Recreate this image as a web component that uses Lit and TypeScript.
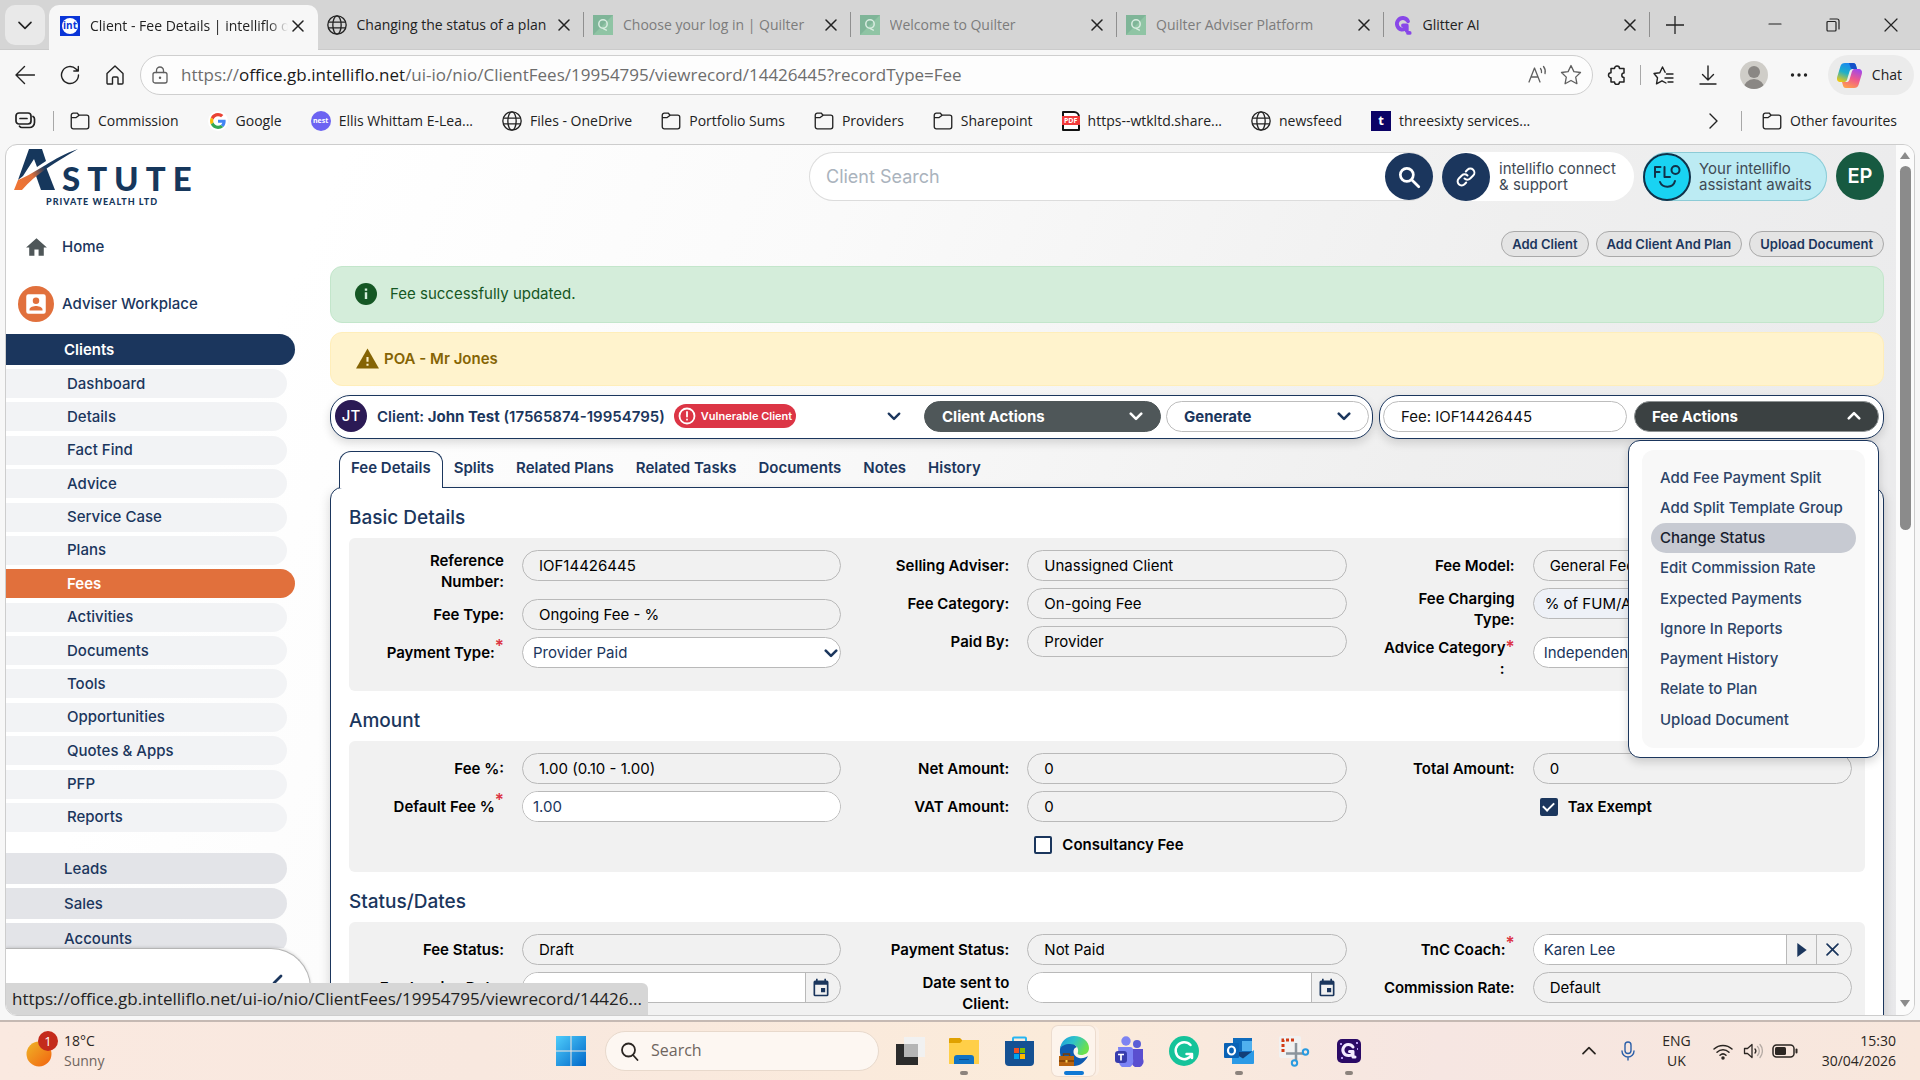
import { LitElement, html, css, svg, nothing, TemplateResult } from "lit";
import { customElement } from "lit/decorators.js";
import { classMap } from "lit/directives/class-map.js";

const base = css`
  * {
    box-sizing: border-box;
  }
  button {
    font: inherit;
    color: inherit;
    background: none;
    border: 0;
    padding: 0;
    margin: 0;
    display: inline-flex;
    align-items: center;
    justify-content: center;
    flex: none;
  }
  a {
    color: inherit;
    text-decoration: none;
  }
  input,
  select {
    font: inherit;
    color: inherit;
    margin: 0;
    min-width: 0;
  }
  svg {
    display: block;
    flex: none;
  }
`;

const stroked = (size: number, body: unknown, width = 1.5, box = 24) => html`
  <svg width=${size} height=${size} viewBox="0 0 ${box} ${box}" fill="none" stroke="currentColor"
    stroke-width=${width} stroke-linecap="round" stroke-linejoin="round" aria-hidden="true">${body}</svg>`;

const filled = (size: number, body: unknown, box = 24) => html`
  <svg width=${size} height=${size} viewBox="0 0 ${box} ${box}" fill="currentColor" aria-hidden="true">${body}</svg>`;

const globe = stroked(20, svg`<circle cx="12" cy="12" r="11"/><ellipse cx="12" cy="12" rx="5" ry="11"/><path d="M2 8.5h20M2 15.5h20"/>`, 1.6);
const folder = stroked(20, svg`<path d="M1.500 8V5a2.500 2.500 0 0 1 2.500-2.500h4.500l2.500 2.500h9A2.500 2.500 0 0 1 22.500 7.500V19a2.500 2.500 0 0 1-2.500 2.500H4A2.500 2.500 0 0 1 1.500 19V8h5.500l4-3"/>`, 1.6);
const cross = stroked(12, svg`<path d="M1 1l10 10M11 1L1 11"/>`, 1.5, 12);
const chevronDown = (size = 12, width = 2) => stroked(size, svg`<path d="M1.500 4l4.500 4.500L10.500 4"/>`, width, 12);
const chevronUp = (size = 12, width = 2) => stroked(size, svg`<path d="M1.500 8L6 3.500 10.500 8"/>`, width, 12);
const calendar = filled(20, svg`<path d="M17 12h-5v5h5v-5zM16 1v2H8V1H6v2H5a2 2 0 0 0-2 2v15a2 2 0 0 0 2 2h14a2 2 0 0 0 2-2V5a2 2 0 0 0-2-2h-1V1h-2zm3 19H5V8h14v12z"/>`);

const quilter = html`
  <svg width="20" height="20" viewBox="0 0 20 20" aria-hidden="true">
    <path fill="#7fb598" d="M0 0h20v20H0z"/><path fill="#8fc4a4" d="M20 0v20H0z"/>
    <circle cx="10" cy="9" r="4.200" fill="none" stroke="#d9ece1" stroke-width="1.500"/>
    <path d="M10 13.500c1.500 0 2 2 4 1.700" fill="none" stroke="#d9ece1" stroke-width="1.300"/>
  </svg>`;

interface TabInfo { title: string; icon: TemplateResult; active?: boolean; asleep?: boolean }

const tabs: TabInfo[] = [
  {
    title: "Client - Fee Details | intelliflo office",
    active: true,
    icon: html`<span class="int"><span>int</span></span>`,
  },
  { title: "Changing the status of a plan", icon: globe },
  { title: "Choose your log in | Quilter", icon: quilter, asleep: true },
  { title: "Welcome to Quilter", icon: quilter, asleep: true },
  { title: "Quilter Adviser Platform", icon: quilter, asleep: true },
  {
    title: "Glitter AI",
    icon: stroked(20, svg`<path stroke="#8847e8" d="M18 7.500A7 7 0 1 0 10.500 17.500 6 6 0 0 0 16.500 12.500H12M16.500 13v6M18 21.500h2"/>`, 4.600),
  },
];

const favourites: { title: string; icon: TemplateResult }[] = [
  { title: "Commission", icon: folder },
  {
    title: "Google",
    icon: html`<svg width="20" height="20" viewBox="-6 -6 60 60" aria-hidden="true">
      <circle cx="24" cy="24" r="30" fill="#fff"/>
      <path fill="#EA4335" d="M24 9.500c3.540 0 6.710 1.220 9.210 3.600l6.850-6.850C35.900 2.380 30.470 0 24 0 14.620 0 6.510 5.380 2.560 13.220l7.980 6.190C12.430 13.720 17.740 9.500 24 9.500z"/>
      <path fill="#4285F4" d="M46.980 24.550c0-1.570-.15-3.090-.38-4.550H24v9.020h12.940c-.58 2.960-2.260 5.480-4.780 7.180l7.730 6c4.510-4.180 7.090-10.360 7.090-17.650z"/>
      <path fill="#FBBC05" d="M10.530 28.590c-.48-1.450-.76-2.990-.76-4.590s.27-3.140.76-4.590l-7.980-6.190C.92 16.460 0 20.120 0 24c0 3.880.92 7.540 2.560 10.780l7.970-6.190z"/>
      <path fill="#34A853" d="M24 48c6.480 0 11.930-2.130 15.890-5.810l-7.730-6c-2.150 1.450-4.920 2.300-8.160 2.300-6.260 0-11.570-4.220-13.470-9.910l-7.980 6.190C6.510 42.620 14.620 48 24 48z"/>
    </svg>`,
  },
  { title: "Ellis Whittam E-Lea...", icon: html`<span class="nest">nest</span>` },
  { title: "Files - OneDrive", icon: globe },
  { title: "Portfolio Sums", icon: folder },
  { title: "Providers", icon: folder },
  { title: "Sharepoint", icon: folder },
  { title: "https--wtkltd.share...", icon: html`<span class="pdf"><span>PDF</span></span>` },
  { title: "newsfeed", icon: globe },
  { title: "threesixty services...", icon: html`<span class="tsq">t</span>` },
];

@customElement("browser-bar")
class BrowserBar extends LitElement {
  static styles = [base, css`
    :host {
      display: block;
      flex: none;
      font: 14px/20px "Open Sans", "Noto Sans", sans-serif;
      color: #222;
      background: #f7f7f7;
    }
    .strip {
      display: flex;
      height: 50px;
      padding: 5px 0 0 5px;
      background: #d5d5d5;
      border-bottom: 1px solid #cbcbcb;
    }
    .tabsearch {
      width: 40px;
      height: 40px;
      border-radius: 10px;
      background: #e9e9e9;
      margin-right: 4px;
    }
    .tabs {
      display: flex;
      flex: 0 1 1601px;
      min-width: 0;
    }
    .tab {
      flex: 1 1 0;
      min-width: 0;
      display: flex;
      align-items: center;
      gap: 10px;
      padding: 0 14px 4px 9px;
      position: relative;
    }
    .tab + .tab::after {
      content: "";
      position: absolute;
      right: 0;
      top: 7px;
      height: 25px;
      border-right: 1px solid #8f8f8f;
    }
    .tab.active {
      height: 45px;
      padding-left: 11px;
      background: #f7f7f7;
      border-radius: 10px 10px 0 0;
    }
    .tab a {
      flex: 1;
      min-width: 0;
      overflow: hidden;
      white-space: nowrap;
    }
    .tab.active a {
      margin-right: -6px;
      mask-image: linear-gradient(to right, #000 90%, transparent);
    }
    .tab.asleep a {
      color: #7c7c7c;
    }
    .int {
      width: 20px;
      height: 20px;
      flex: none;
      background: #0a35d8;
      display: grid;
      place-items: center;
    }
    .int span {
      width: 16px;
      height: 16px;
      border-radius: 50%;
      background: #fff;
      color: #0a35d8;
      font: 700 10px/15px "Open Sans", sans-serif;
      text-align: center;
    }
    .newtab {
      width: 50px;
      height: 40px;
    }
    .window {
      margin-left: auto;
      display: flex;
    }
    .window button {
      width: 58px;
      height: 40px;
    }
    .toolbar {
      display: flex;
      align-items: center;
      height: 50px;
      padding: 0 6px 0 2px;
    }
    .tool {
      width: 45px;
      height: 40px;
    }
    .address {
      flex: 1;
      display: flex;
      align-items: center;
      height: 40px;
      margin: 0 2px 0 3px;
      padding: 0 10px;
      gap: 12px;
      border: 1px solid #cfcfcf;
      border-radius: 20px;
      background: #fdfdfd;
      color: #5f5f5f;
    }
    .url {
      flex: 1;
      display: grid;
      align-items: center;
      font-size: 17px;
      color: #6d6d6d;
    }
    .url > * {
      grid-area: 1 / 1;
    }
    .url input {
      border: 0;
      outline: 0;
      background: none;
      height: 30px;
    }
    .url b {
      font-weight: 400;
      color: #1a1a1a;
    }
    .divider {
      width: 1px;
      height: 20px;
      background: #a8a8a8;
      flex: none;
    }
    .avatar {
      width: 28px;
      height: 28px;
      border-radius: 50%;
      background: #cfcdc8;
      overflow: hidden;
      margin: 0 9px;
    }
    .chat {
      height: 40px;
      gap: 9px;
      padding: 0 12px 0 8px;
      margin-left: 6px;
      border-radius: 20px;
      background: #ebebeb;
    }
    .favourites {
      display: flex;
      align-items: center;
      height: 44px;
      padding: 0 23px 3px 15px;
      gap: 29px;
      white-space: nowrap;
    }
    .favourites a {
      display: flex;
      align-items: center;
      gap: 8px;
    }
    .start {
      display: flex;
      align-items: center;
      gap: 17px;
      margin-right: -13px;
    }
    .end {
      display: flex;
      align-items: center;
      gap: 20px;
      margin-left: auto;
    }
    .nest {
      width: 20px;
      height: 20px;
      border-radius: 50%;
      background: #6c63f2;
      color: #fff;
      font: 700 7px/19px "Open Sans", sans-serif;
      text-align: center;
    }
    .pdf {
      width: 18px;
      height: 20px;
      border: 2px solid #111;
      border-radius: 1px 6px 1px 1px;
      background: #fff;
      display: grid;
      align-items: center;
      justify-content: center;
    }
    .pdf span {
      width: 18px;
      background: #f23b3b;
      color: #fff;
      font: 700 7px/9px "Open Sans", sans-serif;
      text-align: center;
    }
    .tsq {
      width: 20px;
      height: 20px;
      background: #0b0266;
      color: #fff;
      font: 700 13px/19px "Open Sans", sans-serif;
      text-align: center;
    }
  `];

  render() {
    return html`
      <div class="strip">
        <button class="tabsearch" aria-label="Search tabs">${chevronDown(16, 1.200)}</button>
        <nav class="tabs" aria-label="Open tabs">
          ${tabs.map((t) => html`
            <div class=${classMap({ tab: true, active: !!t.active, asleep: !!t.asleep })}>
              ${t.icon}<a href="#">${t.title}</a>
              <button aria-label="Close tab">${cross}</button>
            </div>`)}
        </nav>
        <button class="newtab" aria-label="New tab">${stroked(18, svg`<path d="M9 0v18M0 9h18"/>`, 1.300, 18)}</button>
        <div class="window">
          <button aria-label="Minimise">${stroked(14, svg`<path d="M1 6h12"/>`, 1.200, 14)}</button>
          <button aria-label="Restore">${stroked(14, svg`<path d="M1 4.500A1 1 0 0 1 2 3.500h7a1 1 0 0 1 1 1V12a1 1 0 0 1-1 1H2a1 1 0 0 1-1-1zM4 1h7a2 2 0 0 1 2 2v8"/>`, 1.200, 14)}</button>
          <button aria-label="Close window">${stroked(14, svg`<path d="M1 1l12 12M13 1L1 13"/>`, 1.200, 14)}</button>
        </div>
      </div>
      <div class="toolbar">
        <button class="tool" aria-label="Back">${stroked(20, svg`<path d="M19.500 10H1M9.500 1.500L1 10l8.500 8.500"/>`, 1.400, 20)}</button>
        <button class="tool" aria-label="Reload">${stroked(20, svg`<path d="M18.500 10A8.500 8.500 0 1 1 16 4l2 2M18.300 1.500V6h-4.500"/>`, 1.400, 20)}</button>
        <button class="tool" aria-label="Home page">${stroked(20, svg`<path d="M2 8.500L10 1l8 7.500V18a1 1 0 0 1-1 1h-4v-6a1 1 0 0 0-1-1H8.500a1 1 0 0 0-1 1v6H3a1 1 0 0 1-1-1z"/>`, 1.400, 20)}</button>
        <div class="address">
          <button aria-label="Site information">${stroked(18, svg`<rect x="2" y="6.500" width="14" height="10.500" rx="2"/><path d="M5.500 6.500V4.500a3.500 3.500 0 0 1 7 0v2"/><circle cx="9" cy="11.800" r=".6"/>`, 1.300, 18)}</button>
          <div class="url">
            <input type="text" aria-label="Address" />
            <span>https://<b>office.gb.intelliflo.net</b>/ui-io/nio/ClientFees/19954795/viewrecord/14426445?recordType=Fee</span>
          </div>
          <button aria-label="Read aloud">${stroked(20, svg`<path d="M1 17L6.500 3 12 17M3 12h7M12.500 3.500a5 5 0 0 1 1 4M15.500 1.500a8 8 0 0 1 1.500 7"/>`, 1.300, 20)}</button>
          <button aria-label="Add to favourites">${stroked(22, svg`<path d="M11 1.500l2.900 6.100 6.600.9-4.800 4.600 1.200 6.600L11 16.500l-5.900 3.200 1.200-6.600L1.500 8.500l6.600-.9z"/>`, 1.300, 22)}</button>
        </div>
        <button class="tool" aria-label="Extensions">${stroked(20, svg`<path d="M4 3.500h3.500a2.500 2.500 0 0 1 5 0H17v4.500a2.200 2.200 0 0 0 0 4.400V17h-4.500a2.500 2.500 0 0 1-5 0H4v-4.200a2.500 2.500 0 0 1 0-5z"/>`, 1.500, 20)}</button>
        <span class="divider"></span>
        <button class="tool" aria-label="Favourites">${stroked(21, svg`<path d="M13 18l-4-2.200-5.500 3 1-6L1 8.500l5.800-.8L9.500 2l2.600 5.300M13.500 9H20M12 13h8M15 17h5"/>`, 1.400, 21)}</button>
        <button class="tool" aria-label="Downloads">${stroked(20, svg`<path d="M10 1v14M4.500 9.500L10 15l5.500-5.500M2 19h16"/>`, 1.400, 20)}</button>
        <button class="avatar" aria-label="Profile">${filled(28, svg`<circle cx="14" cy="11" r="6" fill="#8a8784"/><path fill="#8a8784" d="M3.500 28a10.500 10 0 0 1 21 0z"/>`, 28)}</button>
        <button class="tool" aria-label="Settings and more">${filled(18, svg`<circle cx="2.500" cy="9" r="1.700"/><circle cx="9" cy="9" r="1.700"/><circle cx="15.500" cy="9" r="1.700"/>`, 18)}</button>
        <button class="chat">
          <svg width="27" height="27" viewBox="0 0 27 27" aria-hidden="true">
            <defs>
              <linearGradient id="cp1" x1="0.600" y1="0" x2="0.200" y2="1"><stop offset="0" stop-color="#1b86f2"/><stop offset=".5" stop-color="#1fb0c9"/><stop offset="1" stop-color="#f2c80f"/></linearGradient>
              <linearGradient id="cp2" x1="0.700" y1="0" x2="0.300" y2="1"><stop offset="0" stop-color="#a248e8"/><stop offset=".5" stop-color="#ef5a8c"/><stop offset="1" stop-color="#ff9d4d"/></linearGradient>
            </defs>
            <path fill="url(#cp1)" d="M9 1h8c2 0 2.600 1 3 2.500L21 7h-4c-2 0-3 .8-3.600 2.800l-2.200 7.400C10.500 19.500 9.500 20 7.500 20H5c-3.500 0-4.500-2-3.800-5L4.500 4C5.200 2 6.500 1 9 1z"/>
            <path fill="#1552c9" d="M13 1h4c2 0 2.600 1 3 2.500L21 7h-4l-2-.3z"/>
            <path fill="url(#cp2)" d="M18 26h-8c-2 0-2.600-1-3-2.500L6 20h4c2 0 3-.8 3.600-2.800l2.200-7.400C16.500 7.500 17.500 7 19.500 7H22c3.500 0 4.500 2 3.800 5l-3.300 11c-.7 2-2 3-4.500 3z"/>
          </svg>
          Chat
        </button>
      </div>
      <nav class="favourites" aria-label="Favourites bar">
        <div class="start">
          <button aria-label="Workspaces">${stroked(21, svg`<rect x="1" y="3" width="15" height="11" rx="3"/><path d="M5 8.500h7M18 6.500a3 3 0 0 1 1.500 2.500v3.500a5 5 0 0 1-5 5H7a3 3 0 0 1-2.500-1.300"/>`, 1.700, 21)}</button>
          <span class="divider"></span>
        </div>
        ${favourites.map((f) => html`<a href="#">${f.icon}<span>${f.title}</span></a>`)}
        <div class="end">
          <button aria-label="More favourites">${stroked(16, svg`<path d="M5 1l7 7-7 7"/>`, 1.400, 16)}</button>
          <span class="divider"></span>
          <a href="#">${folder}<span>Other favourites</span></a>
        </div>
      </nav>`;
  }
}

const clientPages = ["Dashboard", "Details", "Fact Find", "Advice", "Service Case", "Plans", "Fees", "Activities",
  "Documents", "Tools", "Opportunities", "Quotes & Apps", "PFP", "Reports"];

@customElement("side-nav")
class SideNav extends LitElement {
  static styles = [base, css`
    :host {
      display: flex;
      flex-direction: column;
      flex: none;
      width: 305px;
      font: 500 15px/20px Inter, sans-serif;
      color: #1b365d;
    }
    .logo {
      padding: 4px 0 0 8px;
      height: 75px;
    }
    .scroll {
      flex: 1;
      min-height: 0;
      overflow: hidden;
    }
    .top {
      display: grid;
      grid-template-columns: 36px 1fr;
      column-gap: 8px;
      align-items: center;
      padding-left: 12px;
    }
    .home {
      height: 54px;
    }
    .home svg {
      margin: auto;
    }
    .adviser {
      height: 60px;
    }
    .badge {
      width: 36px;
      height: 36px;
      border-radius: 50%;
      background: #e1703c;
      color: #fff;
      display: grid;
      place-items: center;
    }
    .group {
      display: flex;
      align-items: center;
      width: 281px;
      height: 31px;
      padding-left: 58px;
      border-radius: 0 16px 16px 0;
      background: #e3e4e8;
      margin-bottom: 4px;
    }
    .group.current {
      width: 289px;
      background: #1b365d;
      color: #fff;
      font-weight: 600;
    }
    .pages {
      display: flex;
      flex-direction: column;
      justify-content: space-between;
      min-height: 463px;
      margin-bottom: 21px;
    }
    .pages a {
      display: flex;
      align-items: center;
      width: 281px;
      height: 29px;
      padding-left: 61px;
      border-radius: 0 15px 15px 0;
      background: #f2f3f5;
    }
    .pages a.current {
      width: 289px;
      background: #e1703c;
      color: #fff;
      font-weight: 600;
    }
    .foot {
      height: 67px;
      flex: none;
      display: flex;
      justify-content: flex-end;
      align-items: flex-start;
      padding: 24px 23px 0 0;
      border: 1px solid #b5b5b5;
      border-width: 1px 1px 0 0;
      border-radius: 0 40px 0 0;
      background: #fff;
      box-shadow: 0 -1px 3px rgba(0, 0, 0, 0.120);
    }
  `];

  render() {
    return html`
      <a class="logo" href="#" aria-label="Astute Private Wealth Ltd">
        <svg width="184" height="62" viewBox="14 149 184 62">
          <defs>
            <linearGradient id="swoosh" x1="14" y1="190" x2="78" y2="149" gradientUnits="userSpaceOnUse">
              <stop offset="0.100" stop-color="#ee7434"/><stop offset="0.300" stop-color="#e0703c"/><stop offset="0.500" stop-color="#1a3a5f"/><stop offset="1" stop-color="#17375c"/>
            </linearGradient>
          </defs>
          <path fill="#16375c" d="M29 149h13l4 12-9 6-3-8-11 17-5 4z"/>
          <path fill="#16375c" d="M35 173l11-6 9 23H41z"/>
          <path fill="url(#swoosh)" d="M14 190l4-10c20-8 34-22 60-31C58 161 35 174 22 190z"/>
          <text x="62" y="190.500" font-family="Lato, sans-serif" font-weight="900" font-size="33" letter-spacing="7" fill="#16375c">STUTE</text>
          <text x="46" y="205" font-family="Lato, sans-serif" font-weight="900" font-size="9" letter-spacing="1" fill="#16375c">PRIVATE WEALTH LTD</text>
        </svg>
      </a>
      <nav class="scroll" aria-label="Main">
        <a class="top home" href="#">
          ${filled(25, svg`<path fill="#4f5759" d="M10 20v-6h4v6h5v-8h3L12 3 2 12h3v8z"/>`)}Home
        </a>
        <a class="top adviser" href="#">
          <span class="badge">${filled(26, svg`<path d="M3 5a2 2 0 0 1 2-2h14a2 2 0 0 1 2 2v14a2 2 0 0 1-2 2H5a2 2 0 0 1-2-2V5zm12 4a3 3 0 1 0-6 0 3 3 0 0 0 6 0zm-9 8v1h12v-1c0-2-4-3.100-6-3.100S6 15 6 17z"/>`)}</span>
          Adviser Workplace
        </a>
        <a class="group current" href="#">Clients</a>
        <div class="pages">
          ${clientPages.map((p) => html`<a href="#" class=${classMap({ current: p === "Fees" })}>${p}</a>`)}
        </div>
        <a class="group" href="#">Leads</a>
        <a class="group" href="#">Sales</a>
        <a class="group" href="#">Accounts</a>
      </nav>
      <div class="foot">
        <button aria-label="Collapse menu">${stroked(20, svg`<path d="M14 3l-7 7 7 7"/>`, 2.800, 20)}</button>
      </div>`;
  }
}

type Kind = "text" | "edit" | "select" | "date" | "lookup" | "check" | "tinted";

interface Field { label: string | TemplateResult; value?: string; kind?: Kind; required?: boolean; checked?: boolean }

const sections: { title: string; columns: Field[][] }[] = [
  {
    title: "Basic Details",
    columns: [
      [
        { label: "Reference Number:", value: "IOF14426445" },
        { label: "Fee Type:", value: "Ongoing Fee - %" },
        { label: "Payment Type:", value: "Provider Paid", kind: "select", required: true },
      ],
      [
        { label: "Selling Adviser:", value: "Unassigned Client" },
        { label: "Fee Category:", value: "On-going Fee" },
        { label: "Paid By:", value: "Provider" },
      ],
      [
        { label: "Fee Model:", value: "General Fee Model" },
        { label: "Fee Charging Type:", value: "% of FUM/AUA", kind: "tinted" },
        {
          label: html`<span class="line">Advice Category<sup>*</sup></span><span class="line colon">:</span>`,
          value: "Independent",
          kind: "select",
        },
      ],
    ],
  },
  {
    title: "Amount",
    columns: [
      [
        { label: "Fee %:", value: "1.00 (0.10 - 1.00)" },
        { label: "Default Fee %", value: "1.00", kind: "edit", required: true },
      ],
      [
        { label: "Net Amount:", value: "0" },
        { label: "VAT Amount:", value: "0" },
        { label: "Consultancy Fee", kind: "check" },
      ],
      [
        { label: "Total Amount:", value: "0" },
        { label: "Tax Exempt", kind: "check", checked: true },
      ],
    ],
  },
  {
    title: "Status/Dates",
    columns: [
      [
        { label: "Fee Status:", value: "Draft" },
        { label: "Fee Invoice Date:", value: "", kind: "date" },
      ],
      [
        { label: "Payment Status:", value: "Not Paid" },
        { label: "Date sent to Client:", value: "", kind: "date" },
      ],
      [
        { label: "TnC Coach:", value: "Karen Lee", kind: "lookup", required: true },
        { label: "Commission Rate:", value: "Default" },
      ],
    ],
  },
];

const feeActions = ["Add Fee Payment Split", "Add Split Template Group", "Change Status", "Edit Commission Rate",
  "Expected Payments", "Ignore In Reports", "Payment History", "Relate to Plan", "Upload Document"];

@customElement("fee-page")
class FeePage extends LitElement {
  static styles = [base, css`
    :host {
      display: flex;
      flex-direction: column;
      flex: 1;
      min-width: 0;
      padding: 7px 12px 0 19px;
      font: 400 15px/21px Inter, sans-serif;
      color: #1b365d;
    }
    .header {
      display: flex;
      justify-content: flex-end;
      gap: 9px;
      height: 49px;
      flex: none;
    }
    .search {
      display: flex;
      width: 624px;
      border: 1px solid #dcdcdc;
      border-right: 0;
      border-radius: 25px;
      background: #fff;
    }
    .search input {
      flex: 1;
      border: 0;
      outline: 0;
      background: none;
      padding: 0 16px;
      font-size: 18px;
    }
    .search input::placeholder {
      color: #aab3bd;
      opacity: 1;
    }
    .round {
      width: 48px;
      height: 48px;
      border-radius: 50%;
      background: #1b365d;
      color: #fff;
      display: grid;
      place-items: center;
      flex: none;
    }
    .search .round {
      height: 47px;
    }
    .pill {
      display: flex;
      align-items: center;
      gap: 9px;
      height: 49px;
      border-radius: 25px;
      background: #fff;
      color: #3f4a55;
      font-size: 15px;
      line-height: 16px;
      text-align: left;
      justify-content: flex-start;
      white-space: nowrap;
    }
    .pill.connect {
      width: 192px;
    }
    .pill.flo {
      width: 184px;
      gap: 8px;
      background: #bcebf3;
      box-shadow: inset 0 0 0 1px #8ccbd6;
    }
    .flo .round {
      background: #19d3f3;
      border: 2px solid #10324a;
      color: #10324a;
    }
    .round.user {
      background: #175a41;
      font-size: 20px;
      font-weight: 600;
    }
    .quick {
      display: flex;
      justify-content: flex-end;
      gap: 7px;
      padding: 30px 0 9px;
      font-size: 13px;
      font-weight: 600;
    }
    .quick button {
      height: 26px;
      padding: 0 10px;
      border: 1px solid #a9a9a9;
      border-radius: 13px;
      background: #e4e4e4;
    }
    .alert {
      display: flex;
      align-items: center;
      flex: none;
      padding: 0 24px 2px;
      margin-bottom: 9px;
      border-radius: 12px;
    }
    .alert.ok {
      height: 57px;
      gap: 13px;
      color: #155724;
      background: #d4edda;
      border: 1px solid #c3e6cb;
    }
    .alert.warn {
      height: 54px;
      gap: 4px;
      color: #856404;
      background: #fff3cd;
      border: 1px solid #ffeeba;
      font-weight: 600;
    }
    .bars {
      display: flex;
      gap: 6px;
      flex: none;
      font-weight: 600;
    }
    .bar {
      display: flex;
      align-items: center;
      height: 44px;
      padding: 0 4px 2px;
      border: 1px solid #1b365d;
      border-radius: 20px;
      background: #fff;
      box-shadow: 0 4px 10px rgba(0, 0, 0, 0.140);
    }
    .bar.client {
      flex: 1;
      padding-right: 3px;
    }
    .bar.fee {
      width: 505px;
      gap: 7px;
      padding-left: 3px;
    }
    .initials {
      width: 32px;
      height: 32px;
      border-radius: 50%;
      background: #2b1a55;
      color: #fff;
      font-weight: 500;
      line-height: 32px;
      text-align: center;
      margin-right: 10px;
    }
    .bar b {
      font-weight: 700;
    }
    .vulnerable {
      display: inline-flex;
      align-items: center;
      gap: 5px;
      height: 24px;
      padding: 0 4px 0 4px;
      margin-left: 9px;
      border-radius: 12px;
      background: #dc3545;
      color: #fff;
      font-size: 11px;
    }
    .expand {
      margin: 0 23px 0 auto;
      width: 14px;
    }
    .action {
      display: flex;
      justify-content: space-between;
      height: 31px;
      padding: 0 17px;
      border-radius: 16px;
      border: 1px solid #bdbdbd;
      background: #fff;
      font-weight: 700;
    }
    .action.solid {
      background: #4f5759;
      border-color: #4f5759;
      color: #fff;
    }
    .action.open {
      background: #3b4142;
      border-color: #8e9394;
      color: #fff;
    }
    .w-client {
      width: 237px;
      margin-right: 5px;
    }
    .w-generate {
      width: 203px;
    }
    .ref {
      flex: 1;
      height: 31px;
      border: 1px solid #bdbdbd;
      border-radius: 16px;
      padding: 0 17px;
      background: #fff;
      color: #111;
      font-weight: 400;
    }
    .dropdown {
      position: relative;
      width: 245px;
    }
    .dropdown > button {
      width: 100%;
    }
    .menu {
      position: absolute;
      z-index: 3;
      top: 39px;
      right: 0;
      width: 251px;
      padding: 9px 13px;
      border: 1px solid #1b365d;
      border-radius: 12px;
      background: #fff;
      box-shadow: 0 4px 10px rgba(0, 0, 0, 0.160);
    }
    .menu ul {
      display: flex;
      flex-direction: column;
      justify-content: space-between;
      min-height: 298px;
      list-style: none;
      margin: 0;
      padding: 13px 9px;
      border-radius: 12px;
      background: #f8f8f8;
      font-weight: 500;
      color: #2c4468;
    }
    .menu a {
      display: block;
      height: 30px;
      line-height: 30px;
      padding: 0 9px;
      border-radius: 15px;
      white-space: nowrap;
    }
    .menu a.hover {
      background: #c7cad2;
      color: #17202e;
    }
    .tabs {
      display: flex;
      flex: none;
      position: relative;
      margin: 12px 0 -1px 9px;
      font-weight: 600;
    }
    .tabs a {
      height: 37px;
      padding: 0 11px;
      line-height: 33px;
    }
    .tabs a.current {
      border: 1px solid #1b365d;
      border-bottom: 0;
      border-radius: 12px 12px 0 0;
      background: #fff;
      line-height: 32px;
    }
    .panel {
      flex: none;
      padding: 0 18px;
      border: 1px solid #1b365d;
      border-radius: 12px 12px 0 0;
      background: #fff;
      box-shadow: 0 4px 12px rgba(0, 0, 0, 0.160);
      color: #000;
    }
    h2 {
      margin: 0;
      height: 50px;
      padding-top: 18px;
      font-size: 19px;
      line-height: 24px;
      font-weight: 500;
      color: #1b365d;
    }
    .fields {
      display: grid;
      grid-template-columns: repeat(3, 1fr);
      padding: 12px 0;
      border-radius: 6px;
      background: #f1f1f1;
    }
    .column {
      display: flex;
      flex-direction: column;
      gap: 7px;
      padding-right: 13px;
    }
    .row {
      display: grid;
      grid-template-columns: 155px 1fr;
      column-gap: 18px;
      min-height: 31px;
      align-items: start;
    }
    .row > label {
      align-self: center;
      text-align: right;
      padding-left: 23px;
      font-weight: 600;
    }
    .line {
      display: flex;
      justify-content: flex-end;
      white-space: nowrap;
    }
    sup {
      color: #dc3545;
      font-size: 17px;
      line-height: 0;
      vertical-align: 6px;
    }
    .line sup {
      line-height: 21px;
    }
    .colon {
      margin-right: 10px;
    }
    .box {
      display: flex;
      height: 31px;
      border: 1px solid #b9b9b9;
      border-radius: 16px;
      overflow: hidden;
    }
    .box input {
      flex: 1;
      width: 100%;
      border: 0;
      outline: 0;
      background: none;
      padding: 0 16px;
      color: #000;
    }
    .box.edit input,
    .box.lookup input,
    .box.date input {
      background: #fff;
      color: #1b365d;
      padding: 0 10px;
    }
    .box.tinted {
      background: #eef1f7;
    }
    .box.tinted input {
      padding: 0 11px;
    }
    .box.select {
      display: grid;
      align-items: center;
      background: #fff;
      color: #1b365d;
    }
    .box.select > * {
      grid-area: 1 / 1;
    }
    .box.select svg {
      justify-self: end;
      margin-right: 2px;
      pointer-events: none;
    }
    select {
      appearance: none;
      border: 0;
      outline: 0;
      background: none;
      padding: 0 10px;
      height: 29px;
    }
    .box button {
      border-left: 1px solid #b9b9b9;
      color: #1b365d;
    }
    .box.date button {
      width: 35px;
      padding-right: 4px;
    }
    .box.lookup button {
      width: 30px;
    }
    .box.lookup button + button {
      width: 35px;
      padding-right: 4px;
    }
    .check {
      grid-column: 2;
      display: flex;
      align-items: center;
      gap: 10px;
      height: 31px;
      padding-left: 7px;
      font-weight: 600;
    }
    .check input {
      appearance: none;
      width: 18px;
      height: 18px;
      border: 2px solid #1b365d;
      border-radius: 2px;
      background: #fff;
      display: grid;
      place-items: center;
    }
    .check input:checked {
      background: #1b365d;
    }
    .check input:checked::after {
      content: "";
      width: 5px;
      height: 9px;
      margin-top: -2px;
      border: solid #fff;
      border-width: 0 2px 2px 0;
      transform: rotate(45deg);
    }
  `];

  private field(f: Field, id: string) {
    const kind = f.kind ?? "text";
    if (kind === "check") {
      return html`<div class="row"><div class="check">
        <input type="checkbox" id=${id} ?checked=${!!f.checked} /><label for=${id}>${f.label}</label>
      </div></div>`;
    }
    return html`<div class="row">
      <label for=${id}>${f.label}${f.required ? html`<sup>*</sup>` : nothing}</label>
      <div class="box ${kind}">
        ${kind === "select"
          ? html`<select id=${id}><option>${f.value}</option></select>${chevronDown(14, 2.200)}`
          : html`<input id=${id} type="text" .value=${f.value ?? ""} ?readonly=${kind === "text" || kind === "tinted"} />`}
        ${kind === "date" ? html`<button aria-label="Choose date">${calendar}</button>` : nothing}
        ${kind === "lookup"
          ? html`<button aria-label="Find">${filled(14, svg`<path d="M2 0l8 6-8 6z"/>`, 12)}</button>
              <button aria-label="Clear">${stroked(13, svg`<path d="M1 1l10 10M11 1L1 11"/>`, 1.600, 12)}</button>`
          : nothing}
      </div>
    </div>`;
  }

  render() {
    return html`
      <div class="header">
        <div class="search">
          <input type="search" aria-label="Client Search" placeholder="Client Search" />
          <button class="round" aria-label="Search">${stroked(26, svg`<circle cx="10" cy="10" r="6"/><path d="M14.700 14.700L21 21"/>`, 2.500)}</button>
        </div>
        <button class="pill connect">
          <span class="round">${stroked(24, svg`<path d="M10.500 13.500a4 4 0 0 0 5.700 0l3-3a4 4 0 0 0-5.700-5.700l-1.700 1.700M13.500 10.500a4 4 0 0 0-5.700 0l-3 3a4 4 0 0 0 5.700 5.700l1.700-1.700"/>`, 2)}</span>
          <span>intelliflo connect<br />&amp; support</span>
        </button>
        <button class="pill flo">
          <span class="round">${stroked(32, svg`<path d="M4 16V6h5.500M4 11h4.500M13.500 6v10H19"/><circle cx="24.500" cy="9" r="4"/><path d="M9 21c2.500 6.500 13 6.500 15-1"/>`, 2, 32)}</span>
          <span>Your intelliflo<br />assistant awaits</span>
        </button>
        <button class="round user">EP</button>
      </div>
      <div class="quick">
        <button>Add Client</button><button>Add Client And Plan</button><button>Upload Document</button>
      </div>
      <div class="alert ok" role="status">
        ${filled(22, svg`<circle cx="11" cy="11" r="11"/><path fill="#d4edda" d="M9.800 9.300h2.400V16H9.800zM9.800 5.500h2.400v2.300H9.800z"/>`, 22)}
        Fee successfully updated.
      </div>
      <div class="alert warn" role="alert">
        ${filled(25, svg`<path d="M1 21.500h22L12 2.500z"/><path fill="#fff3cd" d="M11 10.500h2v4.500h-2zM11 17h2v2h-2z"/>`)}
        POA - Mr Jones
      </div>
      <div class="bars">
        <div class="bar client">
          <span class="initials">JT</span>
          <span>Client: <b>John Test</b> (17565874-19954795)</span>
          <span class="vulnerable">${stroked(18, svg`<circle cx="9" cy="9" r="7.500"/><path d="M9 5v4.500M9 12.500v.2"/>`, 1.800, 18)}Vulnerable Client</span>
          <button class="expand" aria-label="Show client details">${chevronDown(14)}</button>
          <button class="action solid w-client">Client Actions${chevronDown(14, 2.200)}</button>
          <button class="action w-generate">Generate${chevronDown(14, 2.200)}</button>
        </div>
        <div class="bar fee">
          <input class="ref" type="text" aria-label="Fee reference" value="Fee: IOF14426445" readonly />
          <div class="dropdown">
            <button class="action open" aria-expanded="true">Fee Actions${chevronUp(14, 2.200)}</button>
            <div class="menu">
              <ul>
                ${feeActions.map((a) => html`<li><a href="#" class=${classMap({ hover: a === "Change Status" })}>${a}</a></li>`)}
              </ul>
            </div>
          </div>
        </div>
      </div>
      <nav class="tabs" aria-label="Fee record">
        ${["Fee Details", "Splits", "Related Plans", "Related Tasks", "Documents", "Notes", "History"].map(
          (t, i) => html`<a href="#" class=${classMap({ current: i === 0 })}>${t}</a>`)}
      </nav>
      <div class="panel">
        ${sections.map((s, i) => html`
          <section>
            <h2>${s.title}</h2>
            <div class="fields">
              ${s.columns.map((c, j) => html`<div class="column">${c.map((f, k) => this.field(f, `f${i}${j}${k}`))}</div>`)}
            </div>
          </section>`)}
      </div>`;
  }
}

const msTiles = svg`<path fill="#f25022" d="M11 13h5v5h-5z"/><path fill="#7fba00" d="M17 13h5v5h-5z"/><path fill="#00a4ef" d="M11 19h5v5h-5z"/><path fill="#ffb900" d="M17 19h5v5h-5z"/>`;
const appIcon = (body: unknown) => html`<svg width="32" height="32" viewBox="0 0 32 32" aria-hidden="true">${body}</svg>`;

const apps: { name: string; icon: TemplateResult; active?: boolean; running?: boolean }[] = [
  {
    name: "Task view",
    icon: appIcon(svg`<path fill="#2b2b2b" d="M3 9h22v21H3z" /><path fill="#f1f1f1" d="M11 2h21v20H11z"/><path fill="#b5b5b5" d="M11 9h14v13H11z"/>`),
  },
  {
    name: "File Explorer",
    running: true,
    icon: appIcon(svg`<path fill="#e0a100" d="M1 4a1 1 0 0 1 1-1h10l3 3v4H1z"/><path fill="#ffcf48" d="M1 8h11l3-3h16v24H1z"/><path fill="#1173c4" d="M6 29v-6a3 3 0 0 1 3-3h14a3 3 0 0 1 3 3v6z"/><path stroke="#0b4f8f" d="M11 24.500h10"/>`),
  },
  {
    name: "Microsoft Store",
    icon: appIcon(svg`<path fill="none" stroke="#27b5f2" stroke-width="2" d="M10 7V3.500a1 1 0 0 1 1-1h11a1 1 0 0 1 1 1V7"/><path fill="#155193" d="M2 6h29v21a4 4 0 0 1-4 4H6a4 4 0 0 1-4-4z"/>${msTiles}`),
  },
  {
    name: "Microsoft Edge",
    active: true,
    icon: appIcon(svg`<defs><linearGradient id="edge" x1="0" y1="0" x2="1" y2="0.400"><stop offset="0" stop-color="#1b9be0"/><stop offset=".5" stop-color="#2fc3c9"/><stop offset="1" stop-color="#6be04d"/></linearGradient></defs>
      <path fill="#0f5bb0" d="M2 14c1-6 6-9 11-8l6 6c-5 1-5 9 2 11 4 1 7-1 9-2-3 6-8 10-14 10C7 31 1 24 2 14z"/>
      <path fill="url(#edge)" d="M2 14C3 6 9 1 16 1c9 0 15 6 15 12 0 5-4 7-8 7-3 0-4-1-3-3 1-5-3-8-8-8-5 0-9 2-10 5z"/>
      <path fill="#b86410" d="M1 21h15v10H1z"/><path fill="none" stroke="#7a3e05" stroke-width="1.500" d="M5.500 21v-2h6v2M1 26h15"/><path fill="#ffd257" d="M7.500 25h2v2.500h-2z"/>`),
  },
  {
    name: "Microsoft Teams",
    icon: appIcon(svg`<circle cx="13" cy="6" r="4.700" fill="#7d83f2"/><circle cx="24" cy="9" r="4" fill="#5b5fd6"/><path fill="#5a4fd0" d="M19 14h11v10a6 6 0 0 1-11 5z"/><path fill="#7b83f5" d="M5 12h12a3 3 0 0 1 3 3v9a7 7 0 0 1-14 4z"/><rect x="2" y="16" width="12" height="12" rx="3" fill="#373cae"/><path stroke="#fff" stroke-width="1.700" d="M5 19.500h6M8 19.500v6"/>`),
  },
  {
    name: "Grammarly",
    icon: appIcon(svg`<circle cx="16" cy="16" r="15" fill="#15c39a"/><path fill="none" stroke="#fff" stroke-width="2.500" stroke-linecap="round" stroke-linejoin="round" d="M22.500 10a8.500 8.500 0 1 0 1.500 9h-5.500M24 19v4"/>`),
  },
  {
    name: "Outlook",
    running: true,
    icon: appIcon(svg`<path fill="#0f6cbd" d="M10 3h19v14H10z"/><path fill="#50b0ee" d="M19 6h10v10H19z"/><path fill="#123f78" d="M9 17h22v8H9z"/><path fill="#2b9ae6" d="M9 17l11 6.500L31 15v13a1 1 0 0 1-1 1H9z"/><rect x="1" y="8" width="15" height="15" rx="1" fill="#0a62b5"/><ellipse cx="8.500" cy="15.500" rx="3.500" ry="4" fill="none" stroke="#fff" stroke-width="2.200"/>`),
  },
  {
    name: "Snipping Tool",
    icon: appIcon(svg`<rect x="1" y="1" width="22" height="22" rx="2" fill="#f1f1f1"/><path fill="none" stroke="#d23b14" stroke-width="3" stroke-dasharray="3 2" d="M5 17V5h13"/><path stroke="#8b949c" stroke-width="2.500" fill="none" d="M18 8v18M8 18.500h18"/><circle cx="27.500" cy="17" r="2.700" fill="none" stroke="#2a9be0" stroke-width="2"/><circle cx="16.500" cy="28" r="2.700" fill="none" stroke="#2a9be0" stroke-width="2"/>`),
  },
  {
    name: "Glitter",
    running: true,
    icon: appIcon(svg`<rect x="4" y="4" width="24" height="24" rx="5" fill="#2b0a66"/><path fill="none" stroke="#f3eaff" stroke-width="3" stroke-linecap="round" stroke-linejoin="round" d="M20 12a5.500 5.500 0 1 0-4.500 8.500 4 4 0 0 0 4.500-4h-3.500M20 16.500V22h2"/><path fill="#b79af0" d="M7 8h2v2H7zM23 7h2v2h-2zM8 22h2v2H8zM24 13h1v2h-1z"/>`),
  },
];

@customElement("task-bar")
class TaskBar extends LitElement {
  static styles = [base, css`
    :host {
      display: grid;
      grid-template-columns: 1fr auto 1fr;
      align-items: center;
      flex: none;
      height: 60px;
      padding: 0 24px 0 26px;
      border-top: 2px solid #c5b9b3;
      background: linear-gradient(to right, #fae9e0, #f8e8df 25%, #fbebda 55%, #f6e6e2 75%, #f8e7dc);
      font: 14px/20px "Open Sans", "Noto Sans", sans-serif;
      color: #2b2622;
    }
    .weather {
      display: flex;
      justify-self: start;
      gap: 4px;
      text-align: left;
    }
    .weather small,
    .find input::placeholder {
      color: #6f655e;
      opacity: 1;
      font-size: 14px;
    }
    .centre {
      display: flex;
      align-items: center;
      margin-left: 10px;
    }
    .find {
      display: flex;
      align-items: center;
      gap: 12px;
      width: 274px;
      height: 40px;
      margin: 0 2px 0 19px;
      padding: 0 14px;
      border: 1px solid #e8d9cc;
      border-radius: 20px;
      background: #fdf7f2;
    }
    .find input {
      flex: 1;
      border: 0;
      outline: 0;
      background: none;
      padding: 0;
    }
    .find input::placeholder {
      font-size: 16px;
    }
    .app {
      position: relative;
      width: 43px;
      height: 50px;
      margin: 0 6px;
      border-radius: 6px;
    }
    .app.active {
      background: #fdf4ec;
      box-shadow: 0 0 0 1px #ecdccf, 4px 0 0 #fbefe5;
    }
    .app.running::after,
    .app.active::after {
      content: "";
      position: absolute;
      bottom: 1px;
      width: 8px;
      height: 4px;
      border-radius: 2px;
      background: #8c837d;
    }
    .app.active::after {
      width: 20px;
      background: #0f78d4;
    }
    .tray {
      display: flex;
      align-items: center;
      justify-self: end;
      text-align: center;
    }
    .mic {
      margin: 0 24px 0 21px;
      color: #2b5fa8;
    }
    .status {
      gap: 9px;
      margin: 0 24px 0 21px;
    }
    .clock {
      text-align: right;
    }
  `];

  render() {
    return html`
      <button class="weather">
        <svg width="34" height="40" viewBox="0 0 34 40" aria-hidden="true">
          <defs><linearGradient id="sun" x1="0" y1="0" x2="1" y2="1"><stop offset="0" stop-color="#efb527"/><stop offset="1" stop-color="#f2620f"/></linearGradient></defs>
          <circle cx="13" cy="23" r="12.500" fill="url(#sun)"/>
          <circle cx="22" cy="10" r="10" fill="#c42b1c"/>
          <text x="22" y="14.500" text-anchor="middle" font-family="Open Sans, sans-serif" font-size="13" fill="#fff">1</text>
        </svg>
        <span>18°C<br /><small>Sunny</small></span>
      </button>
      <div class="centre">
        <button aria-label="Start">
          <svg width="30" height="30" viewBox="0 0 30 30" aria-hidden="true">
            <defs><linearGradient id="win" x1="0" y1="0" x2="1" y2="1"><stop offset="0" stop-color="#4fcdfb"/><stop offset="1" stop-color="#0067c9"/></linearGradient></defs>
            <path fill="url(#win)" d="M0 0h14.500v14.500H0zM15.500 0H30v14.500H15.500zM0 15.500h14.500V30H0zM15.500 15.500H30V30H15.500z"/>
          </svg>
        </button>
        <div class="find">
          ${stroked(19, svg`<circle cx="8.500" cy="8" r="6.500"/><path d="M13 13l4.500 5"/>`, 1.800, 19)}
          <input type="search" aria-label="Search" placeholder="Search" />
        </div>
        ${apps.map((a) => html`<button class=${classMap({ app: true, active: !!a.active, running: !!a.running })} aria-label=${a.name}>${a.icon}</button>`)}
      </div>
      <div class="tray">
        <button aria-label="Hidden icons">${chevronUp(16, 1.300)}</button>
        <button class="mic" aria-label="Microphone">${stroked(20, svg`<rect x="7" y="1" width="6" height="11.500" rx="3"/><path d="M4 10a6 6 0 0 0 12 0M10 16v3"/>`, 1.400, 20)}</button>
        <span>ENG<br />UK</span>
        <button class="status" aria-label="Network, volume and battery">
          ${stroked(22, svg`<path d="M2 9a13 13 0 0 1 18 0M5 12.200a8.500 8.500 0 0 1 12 0M8 15.200a4.500 4.500 0 0 1 6 0"/><circle cx="11" cy="18" r="1" fill="currentColor"/>`, 1.500, 22)}
          ${stroked(20, svg`<path d="M1.500 7.500v5h3l4.500 4v-13l-4.500 4z"/><path d="M12 8a3 3 0 0 1 0 4"/><path stroke="#b5aba5" d="M14.500 5.500a6.500 6.500 0 0 1 0 9M17 3.500a10 10 0 0 1 0 13"/>`, 1.300, 20)}
          <svg width="26" height="20" viewBox="0 0 26 20" aria-hidden="true"><rect x="1" y="4" width="21" height="12" rx="3.500" fill="none" stroke="currentColor" stroke-width="1.500"/><rect x="3" y="6" width="11" height="8" rx="1.500" fill="currentColor"/><path stroke="currentColor" stroke-width="2" stroke-linecap="round" d="M24.500 8.500v3"/></svg>
        </button>
        <span class="clock">15:30<br />30/04/2026</span>
      </div>`;
  }
}

@customElement("app-root")
class AppRoot extends LitElement {
  static styles = [base, css`
    :host {
      display: flex;
      flex-direction: column;
      height: 100vh;
      overflow: hidden;
      background: #f7f7f7;
    }
    .view {
      flex: 1;
      min-height: 0;
      position: relative;
      display: flex;
      margin: 0 5px 4px;
      border: 1px solid #cdcdcd;
      border-radius: 12px;
      overflow: hidden;
      background: linear-gradient(112deg, #fff 15%, #fafafa 38%, #efefef 68%, #e9e9eb);
    }
    .scrollbar {
      flex: none;
      width: 18px;
      display: flex;
      flex-direction: column;
      align-items: center;
      justify-content: space-between;
      padding: 7px 0 8px;
      background: #fbfbfb;
    }
    .track {
      flex: 1;
      width: 11px;
      margin: 7px 0;
    }
    .thumb {
      height: 44%;
      border-radius: 6px;
      background: #8b8b8b;
    }
    .arrow {
      border: 5px solid transparent;
      border-top-width: 0;
      border-bottom: 7px solid #8b8b8b;
    }
    .arrow.down {
      border-top: 7px solid #8b8b8b;
      border-bottom-width: 0;
    }
    .hint {
      position: absolute;
      z-index: 5;
      left: 0;
      bottom: 0;
      height: 32px;
      padding: 0 6px;
      border-radius: 0 6px 0 0;
      background: #d6d6d6;
      color: #222;
      font: 17px/32px "Open Sans", "Noto Sans", sans-serif;
    }
  `];

  render() {
    return html`
      <browser-bar></browser-bar>
      <main class="view">
        <side-nav></side-nav>
        <fee-page></fee-page>
        <div class="scrollbar" aria-hidden="true">
          <span class="arrow"></span>
          <div class="track"><div class="thumb"></div></div>
          <span class="arrow down"></span>
        </div>
        <div class="hint">https://office.gb.intelliflo.net/ui-io/nio/ClientFees/19954795/viewrecord/14426...</div>
      </main>
      <task-bar></task-bar>`;
  }
}
